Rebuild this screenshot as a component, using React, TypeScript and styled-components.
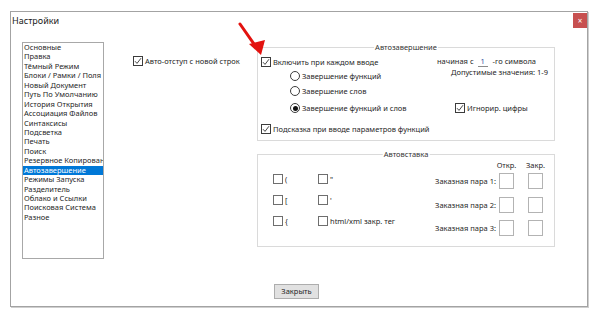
import React from 'react';
import styled, { createGlobalStyle } from 'styled-components';

const GlobalStyle = createGlobalStyle`
  html, body {
    margin: 0;
    padding: 0;
    background: #ffffff;
  }
  body {
    font-family: "Noto Sans", "Open Sans", sans-serif;
    color: #262626;
  }
`;

const Page = styled.div`
  position: relative;
  width: 600px;
  height: 318px;
  overflow: hidden;
  padding: 11px 0 0 10px;
  box-sizing: border-box;
`;

const Window = styled.div`
  width: 578px;
  height: 296px;
  box-sizing: border-box;
  border: 1px solid #a3a3a3;
  box-shadow: 1px 1px 0 #cfcfcf;
  display: flex;
  flex-direction: column;
  background: #fff;
`;

const TitleBar = styled.div`
  height: 17px;
  display: flex;
  align-items: flex-start;
  justify-content: space-between;
`;

const Title = styled.span`
  font-size: 9px;
  line-height: 17px;
  padding-left: 1px;
  color: #1a1a1a;
`;

const CloseButton = styled.div`
  width: 14px;
  height: 15px;
  margin-top: 1px;
  background: #c75050;
  color: #fff;
  font-size: 8px;
  line-height: 15px;
  text-align: center;
`;

const Body = styled.div`
  display: flex;
  padding: 13px 0 0 11px;
`;

const List = styled.div`
  width: 82px;
  height: 217px;
  box-sizing: border-box;
  border: 1px solid #a8a8a8;
  overflow: hidden;
`;

const ListItem = styled.div<{ $selected?: boolean }>`
  height: 9.45px;
  line-height: 9.45px;
  font-size: 7.5px;
  padding-left: 1px;
  white-space: nowrap;
  overflow: hidden;
  background: ${(p) => (p.$selected ? '#0078d7' : 'transparent')};
  color: ${(p) => (p.$selected ? '#fff' : '#262626')};
`;

const MidCol = styled.div`
  width: 124px;
  margin-left: 29px;
  padding-top: 12.5px;
`;

const RightCol = styled.div`
  width: 298px;
  display: flex;
  flex-direction: column;
`;

const Group = styled.div<{ $h: number; $mt: number }>`
  position: relative;
  height: ${(p) => p.$h}px;
  margin-top: ${(p) => p.$mt}px;
  box-sizing: border-box;
  border: 1px solid #dadada;
`;

const Legend = styled.span`
  position: absolute;
  top: -6px;
  left: 50%;
  transform: translateX(-50%);
  background: #fff;
  padding: 0 1px;
  font-size: 7.5px;
  line-height: 11px;
  color: #333;
  white-space: nowrap;
`;

const Row = styled.div<{ $mt?: number; $h?: number; $pl?: number; $end?: boolean }>`
  display: flex;
  align-items: center;
  height: ${(p) => p.$h ?? 12}px;
  margin-top: ${(p) => p.$mt ?? 0}px;
  padding-left: ${(p) => p.$pl ?? 0}px;
  justify-content: ${(p) => (p.$end ? 'flex-end' : 'flex-start')};
  font-size: 7.5px;
  white-space: nowrap;
`;

const Split = styled.div`
  display: flex;
  align-items: flex-start;
`;

const Column = styled.div<{ $w?: number; $pl?: number; $pr?: number }>`
  display: flex;
  flex-direction: column;
  width: ${(p) => (p.$w ? `${p.$w}px` : 'auto')};
  flex: ${(p) => (p.$w ? 'none' : '1')};
  padding-left: ${(p) => p.$pl ?? 0}px;
  padding-right: ${(p) => p.$pr ?? 0}px;
`;

const Box = styled.span<{ $light?: boolean }>`
  width: 10px;
  height: 10px;
  box-sizing: border-box;
  border: 1px solid ${(p) => (p.$light ? '#6e6e6e' : '#3c3c3c')};
  margin-right: 2px;
  display: inline-flex;
  align-items: center;
  justify-content: center;
  flex: none;
  background: #fff;
`;

const RadioCircle = styled.span`
  width: 10px;
  height: 10px;
  box-sizing: border-box;
  border: 1px solid #3c3c3c;
  border-radius: 50%;
  margin-right: 2px;
  display: inline-flex;
  align-items: center;
  justify-content: center;
  flex: none;
`;

const Dot = styled.span`
  width: 5px;
  height: 5px;
  border-radius: 50%;
  background: #111;
`;

const SmallEdit = styled.span`
  display: inline-block;
  width: 10px;
  margin: 0 5px 0 4px;
  border-bottom: 1px solid #8a8a8a;
  color: #2a4aa0;
  text-align: center;
  line-height: 10px;
`;

const PasteGrid = styled.div`
  display: grid;
  grid-template-columns: 45px auto;
  align-content: start;
  row-gap: 9px;
  padding: 18px 0 0 15px;
`;

const PairGrid = styled.div`
  display: grid;
  grid-template-columns: auto 17px 29px;
  grid-template-rows: 6px 16px 16px 16px;
  row-gap: 7.5px;
  align-items: center;
  margin: 4.5px 11px 0 auto;
  font-size: 7.5px;
`;

const PairHead = styled.span`
  justify-self: end;
  align-self: start;
  width: 15px;
  line-height: 11px;
  white-space: nowrap;
  display: flex;
  justify-content: center;
`;

const PairLabel = styled.span`
  justify-self: end;
  white-space: nowrap;
  padding-right: 1px;
`;

const PairBox = styled.span`
  justify-self: end;
  width: 15px;
  height: 16px;
  box-sizing: border-box;
  border: 1px solid #b3b3b3;
`;

const Footer = styled.div`
  margin: 37px 0 0 17px;
`;

const Button = styled.div`
  width: 45px;
  height: 15px;
  box-sizing: border-box;
  border: 1px solid #adadad;
  background: #e1e1e1;
  font-size: 7.5px;
  line-height: 13px;
  text-align: center;
`;

const ArrowLayer = styled.svg`
  position: absolute;
  left: 0;
  top: 0;
  pointer-events: none;
`;

const Tick = () => (
  <svg width="8" height="8" viewBox="0 0 8 8">
    <path d="M1 4.2 L3 6.4 L7 1.2" fill="none" stroke="#333" strokeWidth="0.9" />
  </svg>
);

const Check = ({ checked, light, label }: { checked?: boolean; light?: boolean; label: string }) => (
  <>
    <Box $light={light}>{checked && <Tick />}</Box>
    <span>{label}</span>
  </>
);

const Radio = ({ checked, label }: { checked?: boolean; label: string }) => (
  <>
    <RadioCircle>{checked && <Dot />}</RadioCircle>
    <span>{label}</span>
  </>
);

const items = [
  'Основные',
  'Правка',
  'Тёмный Режим',
  'Блоки / Рамки / Поля',
  'Новый Документ',
  'Путь По Умолчанию',
  'История Открытия',
  'Ассоциация Файлов',
  'Синтаксисы',
  'Подсветка',
  'Печать',
  'Поиск',
  'Резервное Копирование',
  'Автозавершение',
  'Режимы Запуска',
  'Разделитель',
  'Облако и Ссылки',
  'Поисковая Система',
  'Разное',
];

const pasteItems = ['(', '"', '[', "'", '{', 'html/xml закр. тег'];

export default function App() {
  return (
    <>
      <GlobalStyle />
      <Page>
        <Window>
          <TitleBar>
            <Title>Настройки</Title>
            <CloseButton>×</CloseButton>
          </TitleBar>
          <Body>
            <List>
              {items.map((it) => (
                <ListItem key={it} $selected={it === 'Автозавершение'}>
                  {it}
                </ListItem>
              ))}
            </List>
            <MidCol>
              <Row $h={12}>
                <Check checked label="Авто-отступ с новой строк" />
              </Row>
            </MidCol>
            <RightCol>
              <Group $h={94} $mt={5}>
                <Legend>Автозавершение</Legend>
                <Split>
                  <Column $w={176} $pl={3}>
                    <Row $mt={7.5}>
                      <Check checked label="Включить при каждом вводе" />
                    </Row>
                    <Row $mt={2.5} $pl={29}>
                      <Radio label="Завершение функций" />
                    </Row>
                    <Row $mt={3.3} $pl={29}>
                      <Radio label="Завершение слов" />
                    </Row>
                    <Row $mt={5} $pl={29}>
                      <Radio checked label="Завершение функций и слов" />
                    </Row>
                  </Column>
                  <Column $pr={6}>
                    <Row $mt={7.5} $h={11}>
                      начиная с<SmallEdit>1</SmallEdit>-го символа
                    </Row>
                    <Row $h={11} $end>
                      Допустимые значения: 1-9
                    </Row>
                    <Row $mt={25.3} $h={11} $pl={18}>
                      <Check checked label="Игнорир. цифры" />
                    </Row>
                  </Column>
                </Split>
                <Row $mt={8.4} $pl={3}>
                  <Check checked label="Подсказка при вводе параметров функций" />
                </Row>
              </Group>
              <Group $h={93} $mt={13}>
                <Legend>Автовставка</Legend>
                <Split>
                  <PasteGrid>
                    {pasteItems.map((p) => (
                      <Row key={p}>
                        <Check light label={p} />
                      </Row>
                    ))}
                  </PasteGrid>
                  <PairGrid>
                    <span />
                    <PairHead>Откр.</PairHead>
                    <PairHead>Закр.</PairHead>
                    {[1, 2, 3].map((n) => (
                      <React.Fragment key={n}>
                        <PairLabel>Заказная пара {n}:</PairLabel>
                        <PairBox />
                        <PairBox />
                      </React.Fragment>
                    ))}
                  </PairGrid>
                </Split>
              </Group>
              <Footer>
                <Button>Закрыть</Button>
              </Footer>
            </RightCol>
          </Body>
        </Window>
        <ArrowLayer width="600" height="318" viewBox="0 0 600 318">
          <line x1="240" y1="24" x2="256" y2="47" stroke="#e3120f" strokeWidth="3" strokeLinecap="round" />
          <polygon points="261,55 249,44 265,40" fill="#e3120f" />
        </ArrowLayer>
      </Page>
    </>
  );
}
